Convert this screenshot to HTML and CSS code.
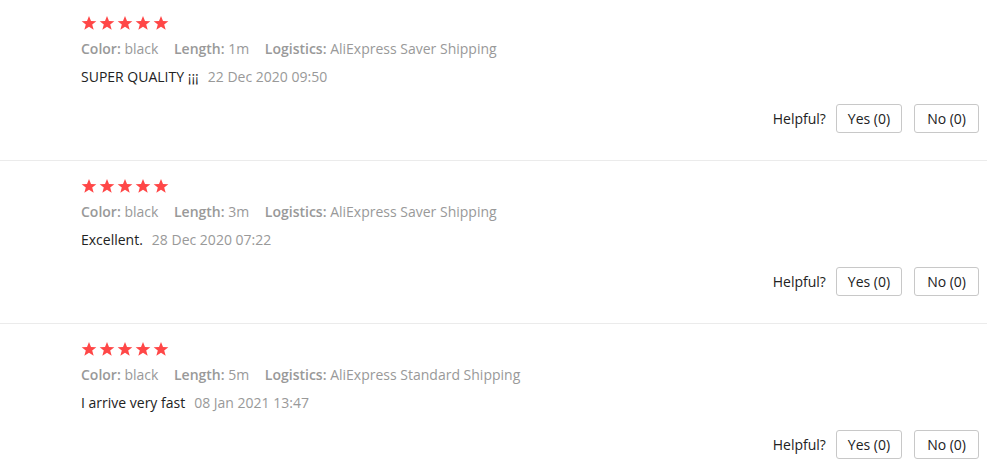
FILE: index.html
```html
<!DOCTYPE html>
<html>
<head>
<meta charset="utf-8">
<link rel="stylesheet" href="styles.css">
</head>
<body>
<div class="list">
  <div class="review">
    <div class="stars">
      <svg class="star" viewBox="0 0 24 24"><polygon points="12,1.5 15,9 23,9.3 16.8,14.3 19,22.2 12,17.7 5,22.2 7.2,14.3 1,9.3 9,9"/></svg>
      <svg class="star" viewBox="0 0 24 24"><polygon points="12,1.5 15,9 23,9.3 16.8,14.3 19,22.2 12,17.7 5,22.2 7.2,14.3 1,9.3 9,9"/></svg>
      <svg class="star" viewBox="0 0 24 24"><polygon points="12,1.5 15,9 23,9.3 16.8,14.3 19,22.2 12,17.7 5,22.2 7.2,14.3 1,9.3 9,9"/></svg>
      <svg class="star" viewBox="0 0 24 24"><polygon points="12,1.5 15,9 23,9.3 16.8,14.3 19,22.2 12,17.7 5,22.2 7.2,14.3 1,9.3 9,9"/></svg>
      <svg class="star" viewBox="0 0 24 24"><polygon points="12,1.5 15,9 23,9.3 16.8,14.3 19,22.2 12,17.7 5,22.2 7.2,14.3 1,9.3 9,9"/></svg>
    </div>
    <div class="info">
      <span class="item"><b>Color:</b> black</span>
      <span class="item"><b>Length:</b> 1m</span>
      <span class="item"><b>Logistics:</b> AliExpress Saver Shipping</span>
    </div>
    <div class="content">SUPER QUALITY ¡¡¡<span class="date">22 Dec 2020 09:50</span></div>
    <div class="helpful">
      <span class="label">Helpful?</span>
      <button class="btn yes">Yes (0)</button>
      <button class="btn no">No (0)</button>
    </div>
  </div>
  <div class="review">
    <div class="stars">
      <svg class="star" viewBox="0 0 24 24"><polygon points="12,1.5 15,9 23,9.3 16.8,14.3 19,22.2 12,17.7 5,22.2 7.2,14.3 1,9.3 9,9"/></svg>
      <svg class="star" viewBox="0 0 24 24"><polygon points="12,1.5 15,9 23,9.3 16.8,14.3 19,22.2 12,17.7 5,22.2 7.2,14.3 1,9.3 9,9"/></svg>
      <svg class="star" viewBox="0 0 24 24"><polygon points="12,1.5 15,9 23,9.3 16.8,14.3 19,22.2 12,17.7 5,22.2 7.2,14.3 1,9.3 9,9"/></svg>
      <svg class="star" viewBox="0 0 24 24"><polygon points="12,1.5 15,9 23,9.3 16.8,14.3 19,22.2 12,17.7 5,22.2 7.2,14.3 1,9.3 9,9"/></svg>
      <svg class="star" viewBox="0 0 24 24"><polygon points="12,1.5 15,9 23,9.3 16.8,14.3 19,22.2 12,17.7 5,22.2 7.2,14.3 1,9.3 9,9"/></svg>
    </div>
    <div class="info">
      <span class="item"><b>Color:</b> black</span>
      <span class="item"><b>Length:</b> 3m</span>
      <span class="item"><b>Logistics:</b> AliExpress Saver Shipping</span>
    </div>
    <div class="content">Excellent.<span class="date">28 Dec 2020 07:22</span></div>
    <div class="helpful">
      <span class="label">Helpful?</span>
      <button class="btn yes">Yes (0)</button>
      <button class="btn no">No (0)</button>
    </div>
  </div>
  <div class="review">
    <div class="stars">
      <svg class="star" viewBox="0 0 24 24"><polygon points="12,1.5 15,9 23,9.3 16.8,14.3 19,22.2 12,17.7 5,22.2 7.2,14.3 1,9.3 9,9"/></svg>
      <svg class="star" viewBox="0 0 24 24"><polygon points="12,1.5 15,9 23,9.3 16.8,14.3 19,22.2 12,17.7 5,22.2 7.2,14.3 1,9.3 9,9"/></svg>
      <svg class="star" viewBox="0 0 24 24"><polygon points="12,1.5 15,9 23,9.3 16.8,14.3 19,22.2 12,17.7 5,22.2 7.2,14.3 1,9.3 9,9"/></svg>
      <svg class="star" viewBox="0 0 24 24"><polygon points="12,1.5 15,9 23,9.3 16.8,14.3 19,22.2 12,17.7 5,22.2 7.2,14.3 1,9.3 9,9"/></svg>
      <svg class="star" viewBox="0 0 24 24"><polygon points="12,1.5 15,9 23,9.3 16.8,14.3 19,22.2 12,17.7 5,22.2 7.2,14.3 1,9.3 9,9"/></svg>
    </div>
    <div class="info">
      <span class="item"><b>Color:</b> black</span>
      <span class="item"><b>Length:</b> 5m</span>
      <span class="item"><b>Logistics:</b> AliExpress Standard Shipping</span>
    </div>
    <div class="content">I arrive very fast<span class="date">08 Jan 2021 13:47</span></div>
    <div class="helpful">
      <span class="label">Helpful?</span>
      <button class="btn yes">Yes (0)</button>
      <button class="btn no">No (0)</button>
    </div>
  </div>
</div>
</body>
</html>
```

FILE: styles.css
```css
html, body {
  margin: 0;
  padding: 0;
  background: #fff;
}
body {
  font-family: "Open Sans", "Noto Sans", sans-serif;
  font-size: 14px;
  color: #222;
}
.list {
  width: 987px;
  margin-top: -2px;
}
.review {
  padding: 15px 8px 27px 81px;
  border-bottom: 1px solid #ebebeb;
}
.stars {
  display: flex;
  align-items: center;
  height: 20px;
  gap: 2px;
}
.star {
  width: 16px;
  height: 16px;
  fill: #ff4747;
}
.info {
  line-height: 32px;
  color: #999;
  white-space: nowrap;
}
.info .item {
  margin-right: 12px;
}
.info b {
  font-weight: 600;
}
.content {
  line-height: 24px;
  color: #222;
}
.date {
  color: #999;
  margin-left: 9px;
}
.helpful {
  display: flex;
  justify-content: flex-end;
  align-items: center;
  margin-top: 15px;
  height: 29px;
  gap: 12px;
}
.helpful .label {
  color: #222;
  margin-right: -2px;
}
.btn {
  font-family: "Open Sans", "Noto Sans", sans-serif;
  font-size: 14px;
  color: #222;
  background: #fff;
  border: 1px solid #c8c8c8;
  border-radius: 3px;
  height: 29px;
  padding: 0 11px;
  cursor: pointer;
}
.btn.no {
  padding: 0 12px;
}
```
